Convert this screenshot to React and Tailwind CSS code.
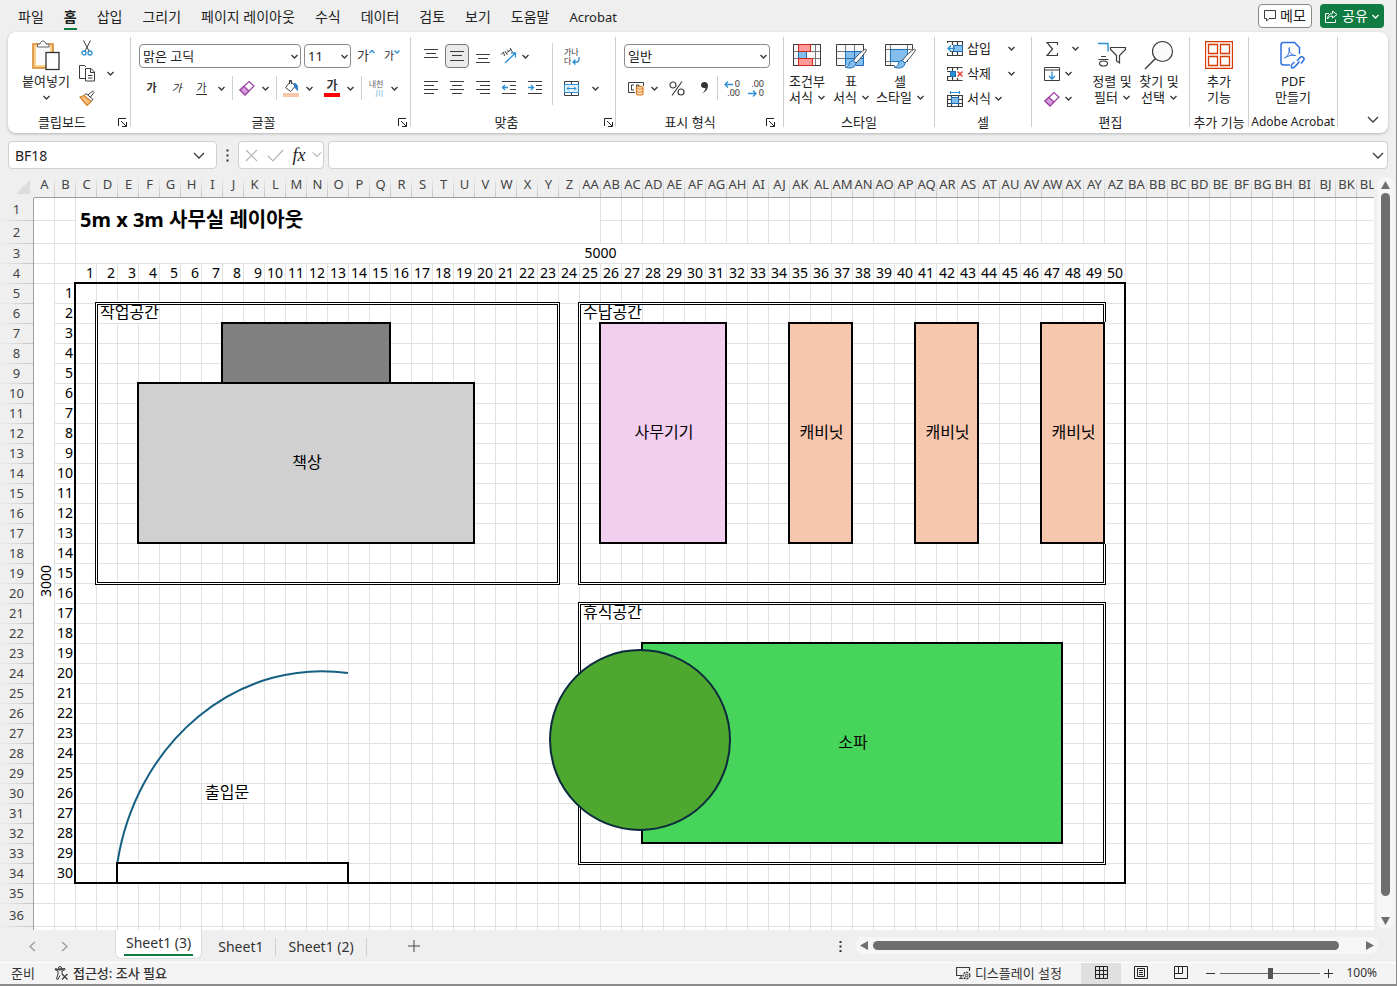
import React, { useState } from 'react';

const TABS = ['파일', '홈', '삽입', '그리기', '페이지 레이아웃', '수식', '데이터', '검토', '보기', '도움말', 'Acrobat'];

const COL_COUNT = 64;
const ROW_COUNT = 37;

const colName = (n) => {
    const first = n > 26 ? String.fromCharCode(64 + Math.floor((n - 1) / 26)) : '';
    return first + String.fromCharCode(65 + ((n - 1) % 26));
};

const COLS = Array.from({ length: COL_COUNT }, (_, i) => i + 1);
const ROWS = Array.from({ length: ROW_COUNT }, (_, i) => i + 1);

// keyed by "row-col"
const MERGES = {
    '1-3': { cols: 25, rows: 2, text: '5m x 3m 사무실 레이아웃', className: 'text-left pl-1 pb-0.5 text-[20px] font-bold' },
    '3-3': { cols: 50, rows: 1, text: '5000', className: 'text-center pb-0.5 text-sm leading-[17px]' },
    '5-1': { cols: 1, rows: 30, text: '3000', className: 'text-center pl-0.5 text-sm', vertical: true },
    '6-4': { cols: 3, rows: 1, text: '작업공간', className: 'text-left pl-[3px] pb-0.5 text-base leading-[17px]' },
    '6-27': { cols: 3, rows: 1, text: '수납공간', className: 'text-left pl-[3px] pb-0.5 text-base leading-[17px]' },
    '21-27': { cols: 3, rows: 1, text: '휴식공간', className: 'text-left pl-[3px] pb-0.5 text-base leading-[17px]' },
    '30-9': { cols: 3, rows: 1, text: '출입문', className: 'text-left pl-[3px] pb-0.5 text-base leading-[17px]' },
};

const COVERED = new Set();
Object.entries(MERGES).forEach(([key, m]) => {
    const [row, col] = key.split('-').map(Number);
    for (let r = row; r < row + m.rows; r++) {
        for (let c = col; c < col + m.cols; c++) {
            if (r !== row || c !== col) COVERED.add(`${r}-${c}`);
        }
    }
});

const ROOMS = [
    { id: 'work', cols: [4, 25], rows: [6, 19] },
    { id: 'storage', cols: [27, 51], rows: [6, 19] },
    { id: 'rest', cols: [27, 51], rows: [21, 33] },
];

const BLOCKS = [
    { id: 'frame', cols: [3, 52], rows: [5, 34], className: '' },
    { id: 'chair', cols: [10, 17], rows: [7, 9], className: 'bg-[#808080]' },
    { id: 'desk', cols: [6, 21], rows: [10, 17], text: '책상', className: 'bg-[#d0d0d0]' },
    { id: 'machine', cols: [28, 33], rows: [7, 17], text: '사무기기', className: 'bg-[#f2ceef]' },
    { id: 'cabinet1', cols: [37, 39], rows: [7, 17], text: '캐비닛', className: 'bg-[#f6c6ad]' },
    { id: 'cabinet2', cols: [43, 45], rows: [7, 17], text: '캐비닛', className: 'bg-[#f6c6ad]' },
    { id: 'cabinet3', cols: [49, 51], rows: [7, 17], text: '캐비닛', className: 'bg-[#f6c6ad] shadow-[1px_0_0_#fff]' },
    { id: 'sofa', cols: [30, 49], rows: [23, 32], text: '소파', className: 'bg-[#47d45a]' },
    { id: 'door', cols: [5, 15], rows: [34, 34], className: 'bg-white' },
];

const gridArea = (item) => ({
    gridColumn: `${item.cols[0] + 1} / ${item.cols[1] + 2}`,
    gridRow: `${item.rows[0] + 1} / ${item.rows[1] + 2}`,
});

const Svg = ({ w, h, children, className = '' }) => (
    <svg width={w} height={h} viewBox={`0 0 ${w} ${h}`} fill="none" stroke="#3b3b3b" className={`shrink-0 ${className}`} aria-hidden="true">
        {children}
    </svg>
);

const Chevron = ({ className = '' }) => (
    <Svg w={7} h={5} className={className}>
        <path d="M.5 1l3 3 3-3" strokeWidth="1.4" />
    </Svg>
);

const WideChevron = ({ className = '' }) => (
    <Svg w={12} h={7} className={className}>
        <path d="M1 1l5 5 5-5" strokeWidth="1.3" />
    </Svg>
);

const IconButton = ({ label, className = 'w-[26px]', children }) => (
    <button type="button" aria-label={label} className={`h-6 flex items-center justify-center shrink-0 text-[#333] ${className}`}>
        {children}
    </button>
);

const Drop = ({ label, className = 'w-[15px]' }) => (
    <IconButton label={`${label} 옵션`} className={className}>
        <Chevron />
    </IconButton>
);

const Select = ({ label, options, className }) => {
    const [value, setValue] = useState(options[0]);

    return (
        <div className={`relative flex items-center shrink-0 ${className}`}>
            <select
                aria-label={label}
                value={value}
                onChange={(e) => setValue(e.target.value)}
                className="appearance-none w-full h-6 pl-[3px] text-[13px] leading-5 border border-[#8a8a8a] rounded bg-white"
            >
                {options.map((option) => (
                    <option key={option}>{option}</option>
                ))}
            </select>
            <Chevron className="absolute right-[3px] pointer-events-none" />
        </div>
    );
};

const Sep = () => <div className="w-px h-6 mx-[3px] bg-[#d0d0d0] shrink-0" />;

const Group = ({ title, launcher, className, children }) => (
    <>
        <section className={`flex flex-col shrink-0 ${className}`}>
            <div className="h-20 flex">{children}</div>
            <div className="h-5 flex items-center text-[13px] leading-5 whitespace-nowrap">
                <span className="flex-1 flex justify-center">{title}</span>
                {launcher && (
                    <button type="button" aria-label={`${title} 설정`} className={`w-3 flex justify-center ${launcher}`}>
                        <Svg w={9} h={9}>
                            <path d="M.5 8V.5H8M3 3l5 5M8.5 4v4.5H4" stroke="#222" />
                        </Svg>
                    </button>
                )}
            </div>
        </section>
        <div className="w-px h-[90px] mt-[5px] bg-[#cfcfcf] shrink-0" />
    </>
);

const BigButton = ({ icon, line1, line2, drop, className }) => (
    <button type="button" className={`flex flex-col items-center shrink-0 pt-[7px] text-[13px] leading-4 text-[#222] whitespace-nowrap ${className}`}>
        <span className="h-8 flex items-center">{icon}</span>
        <span className="h-4 mt-0.5">{line1}</span>
        <span className="h-4 flex items-center gap-[5px]">
            {line2}
            {drop && <Chevron />}
        </span>
    </button>
);

const Lines = ({ rows }) => (
    <Svg w={14} h={14}>
        {rows.map(([x1, x2, y]) => (
            <path key={y} d={`M${x1} ${y}H${x2}`} />
        ))}
    </Svg>
);

const Eraser = () => (
    <Svg w={16} h={16}>
        <path d="M1 10L10 1.5l5 4.5-9 9z" fill="#fff" stroke="#9b3fa5" strokeWidth="1.2" />
        <path d="M1 10l4-3.7 5 4.7-4 4z" fill="#d59ddb" stroke="#9b3fa5" strokeWidth="1.2" />
    </Svg>
);

const Brush = () => (
    <g>
        <path d="M29.5 8c-3 1.500-9 7-12 11.500l2.500 2.500c4-4 9-10 10.500-13z" fill="#fff" stroke="#444" />
        <path d="M17.500 19.500c-3 0-4 2-4.500 4-.5 1.500-2 2.500-4 2.500 3 1.500 10 2 11-3.500z" fill="#83beec" stroke="#1f6fb5" />
    </g>
);

const PasteIcon = () => (
    <Svg w={28} h={31}>
        <rect x="1" y="4" width="20" height="24" fill="#fbd38b" stroke="#d9822b" strokeWidth="1.5" />
        <rect x="4" y="7" width="14" height="18" fill="#fafafa" stroke="none" />
        <path d="M5.500 7V4H8c.5-2 1.500-3 3-3s2.500 1 3 3h3v3z" fill="#fff" stroke="#666" />
        <rect x="14" y="12.5" width="13" height="17" fill="#fff" stroke="#333" strokeWidth="1.3" />
    </Svg>
);

const ConditionalIcon = () => (
    <Svg w={28} h={24}>
        <rect x=".5" y="1.5" width="27" height="21" fill="#fafafa" />
        <path d="M0 8.500h28M0 15.500h28M5.500 1v22M13.500 1v22M22.500 1v22" stroke="#777" />
        <rect x=".5" y="1.5" width="27" height="21" />
        <rect x="5.5" y="8.5" width="8" height="7" fill="#7fbdec" stroke="#1e71b8" />
        <rect x="5.5" y="1.5" width="12" height="7" fill="#ff9a9a" stroke="#d2271c" />
        <rect x="5.5" y="15.5" width="14" height="7" fill="#ff9a9a" stroke="#d2271c" />
    </Svg>
);

const TableStyleIcon = () => (
    <Svg w={31} h={28}>
        <rect x=".5" y="3.5" width="27" height="21" fill="#fafafa" stroke="none" />
        <rect x="9.5" y="10.5" width="18" height="14" fill="#83beec" stroke="none" />
        <path d="M0 10.500h10M0 17.500h10M9.500 3v7M18.500 3v7" stroke="#777" />
        <path d="M9.500 10.500h18M9.500 17.500h18M9.500 10v14M18.500 10v14M27.500 10v14.500H20" stroke="#1e71b8" />
        <path d="M27.500 10V3.500H.5v21h9" />
        <Brush />
    </Svg>
);

const CellStyleIcon = () => (
    <Svg w={31} h={28}>
        <rect x=".5" y="3.5" width="27" height="21" fill="#fafafa" stroke="none" />
        <path d="M0 8.500h28M0 20.500h10M5.500 3v21M22.500 3v6" stroke="#777" />
        <rect x="5.5" y="8.5" width="17" height="12" fill="#83beec" stroke="#1e71b8" />
        <path d="M27.500 8V3.500H.5v21h9" />
        <Brush />
    </Svg>
);

const SortFilterIcon = () => (
    <Svg w={30} h={26}>
        <path d="M1 1.500h10v8" stroke="#2b8fd6" strokeWidth="1.4" />
        <path d="M4 14.500h5M1.500 17.500h10" strokeWidth="1.2" />
        <ellipse cx="6.5" cy="21.5" rx="4" ry="2.5" strokeWidth="1.2" />
        <path d="M13.500 5.500h15v2l-6 6V21l-3-2v-5.500l-6-6z" fill="#fafafa" strokeWidth="1.2" />
    </Svg>
);

const FindIcon = () => (
    <Svg w={30} h={30}>
        <circle cx="18.5" cy="11.5" r="10" fill="#fafafa" strokeWidth="1.2" />
        <path d="M11.500 18.500L1 29" strokeWidth="1.4" />
    </Svg>
);

const AddinIcon = () => (
    <Svg w={28} h={28}>
        <path d="M.5 .5h27v27H.5zM3.500 3.500h9v9h-9zM15.500 3.500h9v9h-9zM3.500 15.500h9v9h-9zM15.500 15.500h9v9h-9z" stroke="#d83b01" strokeWidth="1.3" />
    </Svg>
);

const PdfIcon = () => (
    <Svg w={26} h={28}>
        <path d="M10 24H3.500C2 24 1 23 1 21.500V4c0-1.500 1-2.500 2.500-2.500h11l5 5V13" stroke="#2f6fe0" strokeWidth="1.5" />
        <path d="M4.500 17c3-1.500 5.500-5.500 5-10.500-2 2 1 8 6 8-4-1-8 .5-11 2.500z" stroke="#2f6fe0" />
        <path d="M17 20l3-3.500c2-2 5.500.5 3.500 3L21 22.500M19.500 20.500l-3 3.500c-1.500 2-4.500 4-5 2.500s0-3.500 3-5.500" stroke="#2f6fe0" strokeWidth="1.5" />
    </Svg>
);

const CellsRow = ({ icon, text, wide }) => (
    <button type="button" className="h-[25px] flex items-center text-[13px] text-[#222]">
        <Svg w={16} h={16}>{icon}</Svg>
        <span className="ml-1">{text}</span>
        <Chevron className={wide ? 'ml-[17px]' : 'ml-1'} />
    </button>
);

const Ribbon = () => (
    <div className="mx-2 h-[101px] bg-white rounded-lg shadow-[0_1px_3px_rgba(0,0,0,0.25)] flex text-[#222] overflow-hidden shrink-0">
        <Group title="클립보드" launcher="mr-0.5" className="w-[122px]">
            <BigButton className="w-[62px] ml-[7px]" icon={<PasteIcon />} line1="붙여넣기" line2={<Chevron />} />
            <div className="pt-1 ml-px flex flex-col">
                <div className="h-[25px] flex">
                    <IconButton label="잘라내기" className="w-[18px]">
                        <Svg w={12} h={16}>
                            <path d="M2.500 .5L8 11M9.500 .5L4 11" />
                            <circle cx="3" cy="13" r="2" stroke="#2b8fd6" strokeWidth="1.3" />
                            <circle cx="9" cy="13" r="2" stroke="#2b8fd6" strokeWidth="1.3" />
                        </Svg>
                    </IconButton>
                </div>
                <div className="h-[25px] flex">
                    <IconButton label="복사" className="w-[18px]">
                        <Svg w={17} h={17}>
                            <path d="M6 13.500H.5V.5h5L7 2" />
                            <path d="M6.500 3.500H12L15.500 7v9h-9zM11.500 4v3.500H15M9 10.500h4.500M9 13h4.500" />
                        </Svg>
                    </IconButton>
                    <Drop label="복사" className="w-7" />
                </div>
                <div className="h-[25px] flex">
                    <IconButton label="서식 복사" className="w-[18px]">
                        <Svg w={17} h={16}>
                            <path d="M9 5l4.500-4L15 2.500 11.500 7" />
                            <path d="M7 3.500l7 6-2 2-7-6z" fill="#fff" />
                            <path d="M5 5.500L1 7l7 8.500 4-4z" fill="#f8c27d" stroke="#d9822b" strokeWidth="1.3" />
                        </Svg>
                    </IconButton>
                </div>
            </div>
        </Group>

        <Group title="글꼴" launcher="mr-0.5" className="w-[279px]">
            <div className="pl-2 pt-2 flex flex-col">
                <div className="h-8 flex items-center">
                    <Select label="글꼴 이름" options={['맑은 고딕', '굴림', '돋움']} className="w-[162px] mr-[3px]" />
                    <Select label="글꼴 크기" options={['11', '12', '14']} className="w-[47px]" />
                    <IconButton label="글꼴 크기 크게" className="w-[26px] ml-0.5">
                        <span className="text-[13px]">가</span>
                        <Svg w={6} h={14}><path d="M.5 4L3 1.500 5.500 4" stroke="#2b8fd6" strokeWidth="1.3" /></Svg>
                    </IconButton>
                    <IconButton label="글꼴 크기 작게">
                        <span className="text-[11px]">가</span>
                        <Svg w={6} h={14}><path d="M.5 1.500L3 4l2.500-2.500" stroke="#2b8fd6" strokeWidth="1.3" /></Svg>
                    </IconButton>
                </div>
                <div className="h-8 flex items-center">
                    <IconButton label="굵게" className="w-[25px]"><b className="text-[11px]">가</b></IconButton>
                    <IconButton label="기울임꼴" className="w-[25px]"><i className="text-[11px]">가</i></IconButton>
                    <IconButton label="밑줄" className="w-[25px]"><span className="text-[11px] leading-3 border-b border-[#333]">가</span></IconButton>
                    <Drop label="밑줄" />
                    <Sep />
                    <IconButton label="지우기" className="w-[22px]"><Eraser /></IconButton>
                    <Drop label="지우기" />
                    <Sep />
                    <IconButton label="채우기 색" className="w-[22px]">
                        <Svg w={16} h={18}>
                            <path d="M2.500 8.500l5-6 5 4.500-5 5.500z" fill="#fff" />
                            <path d="M6.500 5V1.500h2V5" />
                            <path d="M11 4.500c3 0 4 2.500 3.500 7l-2.500-3z" fill="#2b7fc6" stroke="#2b7fc6" />
                            <rect x="0" y="14" width="16" height="4" fill="#f6c6ad" stroke="none" />
                        </Svg>
                    </IconButton>
                    <Drop label="채우기 색" />
                    <IconButton label="글꼴 색" className="w-[22px] ml-1">
                        <span className="w-4 h-[18px] border-b-4 border-[#ff0000] text-xs leading-[13px] font-bold text-center">가</span>
                    </IconButton>
                    <Drop label="글꼴 색" />
                    <Sep />
                    <IconButton label="윗주 필드" className="w-[22px]">
                        <span className="flex flex-col text-[8px] leading-[9px] text-[#666]">
                            내천
                            <span className="text-right text-[#5aa5dc]">川</span>
                        </span>
                    </IconButton>
                    <Drop label="윗주 필드" />
                </div>
            </div>
        </Group>

        <Group title="맞춤" launcher="mr-px" className="w-[204px]">
            <div className="pl-[7px] pt-2 flex flex-col">
                <div className="h-8 flex items-center">
                    <IconButton label="위쪽 맞춤">
                        <Lines rows={[[0, 14, 0.5], [2, 12, 4.5], [0, 14, 8.5]]} />
                    </IconButton>
                    <IconButton label="가운데 맞춤" className="w-6 mx-px border border-[#777] rounded bg-[#ebebeb]">
                        <Lines rows={[[0, 14, 2.5], [2, 12, 6.5], [0, 14, 11.5]]} />
                    </IconButton>
                    <IconButton label="아래쪽 맞춤">
                        <Lines rows={[[0, 14, 5.5], [2, 12, 9.5], [0, 14, 13.5]]} />
                    </IconButton>
                    <IconButton label="방향" className="w-6">
                        <Svg w={17} h={16}>
                            <path d="M5 15L15.500 5M11 5h4.500v4.500" stroke="#2b8fd6" strokeWidth="1.3" />
                            <path d="M1 6.500L3.500 4l1 4M5 3l2.500 4M7 4.500L8.500 3.500M7 1.500l2 2L11 1M10 0l2.500 4" />
                        </Svg>
                    </IconButton>
                    <Drop label="방향" className="w-2.5" />
                </div>
                <div className="h-8 flex items-center">
                    <IconButton label="왼쪽 맞춤">
                        <Lines rows={[[0, 14, 0.5], [0, 10, 4.5], [0, 14, 8.5], [0, 10, 12.5]]} />
                    </IconButton>
                    <IconButton label="가로 가운데 맞춤">
                        <Lines rows={[[0, 14, 0.5], [2, 12, 4.5], [0, 14, 8.5], [2, 12, 12.5]]} />
                    </IconButton>
                    <IconButton label="오른쪽 맞춤">
                        <Lines rows={[[0, 14, 0.5], [4, 14, 4.5], [0, 14, 8.5], [4, 14, 12.5]]} />
                    </IconButton>
                    <IconButton label="내어쓰기">
                        <Svg w={14} h={14}>
                            <path d="M0 .5h14M8 4.500h6M8 8.500h6M0 12.500h14" />
                            <path d="M6 6.500H.5M3 4L.5 6.500 3 9" stroke="#2b8fd6" strokeWidth="1.3" />
                        </Svg>
                    </IconButton>
                    <IconButton label="들여쓰기">
                        <Svg w={14} h={14}>
                            <path d="M0 .5h14M8 4.500h6M8 8.500h6M0 12.500h14" />
                            <path d="M0 6.500h5.500M3 4l2.500 2.500L3 9" stroke="#2b8fd6" strokeWidth="1.3" />
                        </Svg>
                    </IconButton>
                </div>
            </div>
            <div className="w-px h-[62px] mt-[11px] ml-1 mr-[3px] bg-[#d0d0d0]" />
            <div className="pt-2 ml-px flex flex-col">
                <div className="h-8 flex items-center">
                    <IconButton label="자동 줄 바꿈" className="w-[30px]">
                        <span className="relative flex flex-col text-[8px] leading-[9px] w-4 text-left">
                            <span>가나</span>
                            <span>다</span>
                            <Svg w={8} h={8} className="absolute right-0 bottom-0">
                                <path d="M7 0v2c0 2-1 3-2.500 3H1M3.500 2.500L1 5l2.500 2.500" stroke="#2b8fd6" strokeWidth="1.3" />
                            </Svg>
                        </span>
                    </IconButton>
                </div>
                <div className="h-8 flex items-center">
                    <IconButton label="병합하고 가운데 맞춤" className="w-7">
                        <Svg w={15} h={15}>
                            <path d="M.5 .5h14v14H.5zM7.500 0v3M7.500 12v3" />
                            <rect x=".5" y="3.5" width="14" height="8" fill="#eaf4fc" stroke="#2b8fd6" />
                            <path d="M3 7.500h9M5 5.500l-2 2 2 2M10 5.500l2 2-2 2" stroke="#2b8fd6" />
                        </Svg>
                    </IconButton>
                    <Drop label="병합하고 가운데 맞춤" className="w-5" />
                </div>
            </div>
        </Group>

        <Group title="표시 형식" launcher="mr-[7px]" className="w-[167px]">
            <div className="pl-2 pt-2 flex flex-col">
                <div className="h-8 flex items-center">
                    <Select label="표시 형식" options={['일반', '숫자', '통화']} className="w-[146px]" />
                </div>
                <div className="h-8 flex items-center">
                    <IconButton label="회계 표시 형식" className="w-6">
                        <Svg w={17} h={15}>
                            <path d="M7 11.500H.5v-10h15V5" />
                            <path d="M6 4H3.500v5H6M8.500 7V4H11v2" />
                            <path d="M8.500 6.500v6c0 2 6.500 2 6.500 0v-6c0-1.500-6.500-1.500-6.500 0z" fill="#fde3c4" stroke="#e07b1a" strokeWidth="1.2" />
                            <path d="M8.500 7c0 1.500 6.500 1.500 6.500 0M8.500 10c0 1.500 6.500 1.500 6.500 0" stroke="#e07b1a" />
                        </Svg>
                    </IconButton>
                    <Drop label="회계 표시 형식" className="w-3" />
                    <IconButton label="백분율 스타일" className="w-[34px]">
                        <Svg w={16} h={15}>
                            <circle cx="4" cy="4" r="3" strokeWidth="1.2" />
                            <circle cx="12" cy="11" r="3" strokeWidth="1.2" />
                            <path d="M13 .5L3 14.500" strokeWidth="1.2" />
                        </Svg>
                    </IconButton>
                    <IconButton label="쉼표 스타일" className="w-5">
                        <Svg w={9} h={14}>
                            <path d="M4.500 1C2.500 1 1 2.200 1 4s1.300 3 3 3c.6 0 1 0 1.500-.3C5.300 9 4 11 2 12.500c4-1.500 6-4.500 6-8C8 2.500 6.500 1 4.500 1z" fill="#333" stroke="none" />
                        </Svg>
                    </IconButton>
                    <Sep />
                    <IconButton label="자릿수 늘림" className="w-[22px]">
                        <span className="relative flex flex-col text-[9px] leading-[9px] w-4 text-right">
                            <span>0</span>
                            <span>.00</span>
                            <Svg w={9} h={7} className="absolute left-0 top-0.5">
                                <path d="M9 3.500H1M4 .5l-3 3 3 3" stroke="#2b8fd6" strokeWidth="1.3" />
                            </Svg>
                        </span>
                    </IconButton>
                    <IconButton label="자릿수 줄임">
                        <span className="relative flex flex-col text-[9px] leading-[9px] w-4 text-right">
                            <span>.00</span>
                            <span>0</span>
                            <Svg w={9} h={7} className="absolute left-0 bottom-0">
                                <path d="M0 3.500h8M5 .5l3 3-3 3" stroke="#2b8fd6" strokeWidth="1.3" />
                            </Svg>
                        </span>
                    </IconButton>
                </div>
            </div>
        </Group>

        <Group title="스타일" className="w-[150px]">
            <BigButton className="w-11 ml-px" icon={<ConditionalIcon />} line1="조건부" line2="서식" drop />
            <BigButton className="w-11" icon={<TableStyleIcon />} line1="표" line2="서식" drop />
            <BigButton className="w-[54px]" icon={<CellStyleIcon />} line1="셀" line2="스타일" drop />
        </Group>

        <Group title="셀" className="w-24">
            <div className="pl-3 pt-1 flex flex-col items-start">
                <CellsRow
                    wide
                    text="삽입"
                    icon={
                        <>
                            <path d="M.5 2V.5h15v14H.5V12M5.500 1v3M10.500 1v14M5.500 11v4M11 4.500h5M3 10.500h13" strokeWidth="1.2" />
                            <rect x="6.5" y="4.5" width="9" height="6" fill="#83beec" stroke="#1e71b8" />
                            <path d="M8 7.500H1M4 4.500l-3 3 3 3" stroke="#2b8fd6" strokeWidth="1.3" />
                        </>
                    }
                />
                <CellsRow
                    wide
                    text="삭제"
                    icon={
                        <>
                            <path d="M.5 4V1.500h15M5.500 1v4M10.500 1v3M.5 11v3.500h15M5.500 11v4M10.500 12v3M0 5.500h4M0 10.500h4" strokeWidth="1.2" />
                            <rect x="3.5" y="5.5" width="5" height="5" fill="#2b8fd6" stroke="#1e71b8" />
                            <path d="M10.500 5.500l5 5M15.500 5.500l-5 5" stroke="#e0322b" strokeWidth="1.4" />
                        </>
                    }
                />
                <CellsRow
                    text="서식"
                    icon={
                        <>
                            <path d="M.5 4.500h15v11H.5zM0 8.500h4M12 8.500h4M4.500 4v12M11.500 4v12M0 12.500h16" strokeWidth="1.2" />
                            <rect x="4.5" y="6.5" width="7" height="6" fill="#83beec" stroke="#1e71b8" />
                            <path d="M3 1.500h10M3.500 0v3M12.500 0v3" stroke="#2b8fd6" />
                        </>
                    }
                />
            </div>
        </Group>

        <Group title="편집" className="w-[157px]">
            <div className="w-14 pl-2 pt-1 flex flex-col">
                <div className="h-[25px] flex items-center">
                    <IconButton label="합계" className="w-6">
                        <Svg w={12} h={14}><path d="M11.500 3V.5H1L6.500 7 1 13.500h10.500V11" strokeWidth="1.2" /></Svg>
                    </IconButton>
                    <Drop label="합계" className="w-[23px]" />
                </div>
                <div className="h-[25px] flex items-center">
                    <IconButton label="채우기" className="w-6">
                        <Svg w={16} h={14}>
                            <path d="M.5 .5h15v13H.5zM0 3h16" />
                            <path d="M8 4.500v7M5 9l3 3 3-3" stroke="#2b8fd6" strokeWidth="1.3" />
                        </Svg>
                    </IconButton>
                    <Drop label="채우기" className="w-2" />
                </div>
                <div className="h-[25px] flex items-center">
                    <IconButton label="지우기" className="w-6"><Eraser /></IconButton>
                    <Drop label="지우기" className="w-2" />
                </div>
            </div>
            <BigButton className="w-12" icon={<SortFilterIcon />} line1="정렬 및" line2="필터" drop />
            <BigButton className="w-[46px]" icon={<FindIcon />} line1="찾기 및" line2="선택" drop />
        </Group>

        <Group title="추가 기능" className="w-[58px]">
            <BigButton className="w-full" icon={<AddinIcon />} line1="추가" line2="기능" />
        </Group>

        <Group title={<span className="text-xs leading-5">Adobe Acrobat</span>} className="w-[88px]">
            <BigButton className="w-full" icon={<PdfIcon />} line1="PDF" line2="만들기" />
        </Group>

        <button type="button" aria-label="리본 축소" className="ml-auto mr-[9px] self-end mb-[10px]">
            <WideChevron />
        </button>
    </div>
);

const FormulaBar = () => (
    <div className="mx-2 mt-2 h-7 flex items-center shrink-0">
        <div className="relative h-full w-[209px] flex items-center shrink-0">
            <input aria-label="이름 상자" defaultValue="BF18" className="w-full h-full pl-1.5 pr-7 text-sm text-[#222] bg-white border border-[#d0d0d0] rounded" />
            <WideChevron className="absolute right-[12px]" />
        </div>
        <div className="w-[21px] flex justify-center">
            <Svg w={3} h={13}>
                <path d="M.5 1.500h2M.5 6.500h2M.5 11.500h2" stroke="#333" strokeWidth="2" />
            </Svg>
        </div>
        <div className="h-full w-[86px] flex items-center bg-white border border-[#d0d0d0] rounded shrink-0">
            <button type="button" aria-label="취소" className="w-6 flex justify-center">
                <Svg w={13} h={13}><path d="M1 1l11 11M12 1L1 12" stroke="#b5b5b5" strokeWidth="1.2" /></Svg>
            </button>
            <button type="button" aria-label="입력" className="w-6 flex justify-center">
                <Svg w={17} h={13}><path d="M1 7l5 5L16 1" stroke="#b5b5b5" strokeWidth="1.2" /></Svg>
            </button>
            <button type="button" aria-label="함수 삽입" className="w-6 font-['Liberation_Serif',serif] italic text-lg leading-6 text-[#222]">fx</button>
            <Svg w={10} h={6} className="mx-px"><path d="M1 .5l4 4 4-4" stroke="#888" /></Svg>
        </div>
        <div className="relative h-full flex-1 ml-1 flex items-center">
            <input aria-label="수식 입력줄" className="w-full h-full pl-2 pr-7 text-sm bg-white border border-[#d0d0d0] rounded" />
            <WideChevron className="absolute right-1" />
        </div>
    </div>
);

const Cell = ({ row, col }) => {
    const key = `${row}-${col}`;
    if (COVERED.has(key)) return null;

    const merge = MERGES[key];
    if (merge) {
        return (
            <td colSpan={merge.cols} rowSpan={merge.rows} className={`p-0 border-r border-b border-[#e1e1e1] whitespace-nowrap align-middle ${merge.className}`}>
                {merge.vertical ? <span className="inline-block rotate-180 [writing-mode:vertical-rl]">{merge.text}</span> : merge.text}
            </td>
        );
    }

    let value = '';
    if (row === 4 && col >= 3 && col <= 52) value = col - 2;
    if (col === 2 && row >= 5 && row <= 34) value = row - 4;
    return (
        <td className="p-0 pr-0.5 pb-0.5 border-r border-b border-[#e1e1e1] text-right text-sm leading-[17px]">{value}</td>
    );
};

const Sheet = () => (
    <div className="relative flex-1 min-w-0 overflow-hidden bg-white">
        <table className="table-fixed w-[1378px] border-separate border-spacing-0 text-black">
            <colgroup>
                <col className="w-[34px]" />
                {COLS.map((c) => (
                    <col key={c} className="w-[21px]" />
                ))}
            </colgroup>
            <thead>
                <tr className="h-[22px]">
                    <th className="p-0 bg-[#efefef] border-b border-[#efefef]">
                        <Svg w={14} h={14} className="ml-auto mr-1"><path d="M14 0v14H0z" fill="#dcdcdc" stroke="none" /></Svg>
                    </th>
                    {COLS.map((c) => (
                        <th key={c} scope="col" className="p-0 align-top bg-[#efefef] bg-[linear-gradient(to_bottom,#efefef,#c4c4c4)] bg-[length:1px_100%] bg-right bg-no-repeat border-b border-[#9e9e9e] text-[13px] leading-[17px] font-normal text-[#444]">
                            <span className="flex justify-center">{colName(c)}</span>
                        </th>
                    ))}
                </tr>
            </thead>
            <tbody>
                {ROWS.map((r) => (
                    <tr key={r} className={r < 3 || r === 36 ? 'h-[23px]' : 'h-5'}>
                        <th scope="row" className="p-0 pb-0.5 bg-[#efefef] bg-[linear-gradient(to_right,#efefef,#c4c4c4)] bg-[length:100%_1px] bg-bottom bg-no-repeat border-r border-[#9e9e9e] text-[13px] leading-4 font-normal text-[#444]">{r}</th>
                        {COLS.map((c) => (
                            <Cell key={c} row={r} col={c} />
                        ))}
                    </tr>
                ))}
            </tbody>
        </table>

        {/* furniture drawn over the cells */}
        <div className="absolute top-0 left-0 grid grid-cols-[34px_repeat(64,21px)] grid-rows-[22px_23px_23px_repeat(33,20px)_23px]">
            {ROOMS.map((room) => (
                <div key={room.id} style={gridArea(room)} className="-ml-0.5 -mt-0.5 -mr-px -mb-px border border-black shadow-[inset_0_0_0_1px_#fff,inset_0_0_0_2px_#000]" />
            ))}
            {BLOCKS.map((block) => (
                <div key={block.id} style={gridArea(block)} className={`-ml-0.5 -mt-0.5 pl-0.5 pb-0.5 border-2 border-black flex items-center justify-center text-base leading-4 ${block.className}`}>
                    {block.text}
                </div>
            ))}
        </div>
        <div className="absolute left-[549px] top-[473px] w-[182px] h-[182px] rounded-full bg-[#4ea72e] border-2 border-[#0c2a3e]" />
        <svg width="234" height="196" viewBox="0 0 234 196" fill="none" className="absolute left-[116px] top-[492px]" aria-hidden="true">
            <path d="M1.500 194A207.500 231 0 0 1 232 5" stroke="#156082" strokeWidth="2" />
        </svg>
    </div>
);

const VerticalScroll = () => (
    <div className="w-[22px] shrink-0 flex justify-center bg-[#efefef]">
        <div className="w-[17px] my-px flex flex-col items-center bg-[#f6f6f6] rounded-lg">
            <button type="button" aria-label="위로" className="h-4 flex items-center">
                <Svg w={9} h={8}><path d="M4.500 0L9 8H0z" fill="#6e6e6e" stroke="none" /></Svg>
            </button>
            <div className="w-[9px] h-[703px] bg-[#6e6e6e] rounded-full" />
            <button type="button" aria-label="아래로" className="h-2 mt-auto mb-1 flex items-center">
                <Svg w={9} h={8}><path d="M0 0h9L4.500 8z" fill="#6e6e6e" stroke="none" /></Svg>
            </button>
        </div>
    </div>
);

const SheetTabs = () => {
    const [active, setActive] = useState('Sheet1 (3)');
    return (
        <div className="h-8 flex items-start shrink-0 text-sm text-[#333]">
            <button type="button" aria-label="이전 시트" className="ml-6 w-4 h-8 flex items-center justify-center">
                <Svg w={7} h={11}><path d="M6 1L1 5.500 6 10" stroke="#9a9a9a" strokeWidth="1.3" /></Svg>
            </button>
            <button type="button" aria-label="다음 시트" className="ml-4 w-4 h-8 flex items-center justify-center">
                <Svg w={7} h={11}><path d="M1 1l5 4.500L1 10" stroke="#9a9a9a" strokeWidth="1.3" /></Svg>
            </button>
            <div role="tablist" className="ml-[43px] flex items-center">
                {['Sheet1 (3)', 'Sheet1', 'Sheet1 (2)'].map((name) => (
                    <button
                        key={name}
                        type="button"
                        role="tab"
                        aria-selected={name === active}
                        onClick={() => setActive(name)}
                        className={
                            name === active
                                ? 'h-[29px] mb-[3px] mr-1 px-2 bg-white border-x border-b border-[#dcdcdc] rounded-b-md'
                                : 'h-[18px] mt-px px-3 leading-[18px] border-r border-[#cfcfcf] whitespace-nowrap'
                        }
                    >
                        <span className={name === active ? 'block px-0.5 leading-[22px] border-b-2 border-[#107c41]' : ''}>{name}</span>
                    </button>
                ))}
            </div>
            <button type="button" aria-label="새 시트" className="ml-[41px] h-8 flex items-center">
                <Svg w={12} h={12}><path d="M6 0v12M0 6h12" stroke="#444" /></Svg>
            </button>
            <div className="ml-auto h-8 flex items-center">
                <Svg w={3} h={11}>
                    <path d="M.5 1h2M.5 5.500h2M.5 10h2" stroke="#333" strokeWidth="2" />
                </Svg>
            </div>
            <div className="ml-[14px] mr-[18px] mt-[7px] w-[522px] h-[17px] px-1 flex items-center bg-[#f6f6f6] rounded-lg">
                <button type="button" aria-label="왼쪽으로"><Svg w={8} h={9}><path d="M8 0v9L0 4.500z" fill="#6e6e6e" stroke="none" /></Svg></button>
                <div className="ml-[5px] w-[466px] h-[9px] bg-[#6e6e6e] rounded-full" />
                <button type="button" aria-label="오른쪽으로" className="ml-auto"><Svg w={8} h={9}><path d="M0 0v9l8-4.500z" fill="#6e6e6e" stroke="none" /></Svg></button>
            </div>
        </div>
    );
};

const StatusBar = () => {
    const [zoom, setZoom] = useState(100);
    return (
        <div className="h-6 flex items-center shrink-0 bg-[#f4f4f4] border-t border-white border-b-2 border-b-[#8a8a8a] text-[13px] leading-5 text-[#333]">
            <span className="ml-[11px] pb-0.5">준비</span>
            <button type="button" className="ml-[19px] pb-0.5 flex items-center gap-1 font-medium whitespace-nowrap">
                <Svg w={15} h={14}>
                    <circle cx="6" cy="2" r="1.5" />
                    <path d="M1 3.500l3 1.500v3L2.500 13l1.500.5L6 9.500M11.500 3.500L8 5v3M1 3.500l.5-1L5 4h2l4-1.500z" />
                    <path d="M8 8l5.500 5.500M13.500 8L8 13.500" strokeWidth="1.3" />
                </Svg>
                접근성: 조사 필요
            </button>
            <button type="button" className="ml-auto mr-[19px] pb-0.5 flex items-center gap-1 whitespace-nowrap">
                <Svg w={15} h={14}>
                    <path d="M6 9.500H.5v-8h13V5M3 12.500h4M5 10v2" strokeWidth="1.2" />
                    <circle cx="10.5" cy="9.5" r="1.3" />
                    <circle cx="10.5" cy="9.5" r="3.3" strokeDasharray="2 1" strokeWidth="1.5" />
                </Svg>
                디스플레이 설정
            </button>
            <button type="button" aria-label="기본" className="w-10 h-full pb-0.5 flex items-center justify-center bg-[#e0e0e0]">
                <Svg w={13} h={13}><path d="M.5 .5h12v12H.5zM4.500 0v13M8.500 0v13M0 4.500h13M0 8.500h13" stroke="#222" /></Svg>
            </button>
            <button type="button" aria-label="페이지 레이아웃" className="w-10 h-full pb-0.5 flex items-center justify-center">
                <Svg w={14} h={13}><path d="M.5 .5h13v12H.5zM3.500 2.500h7v8h-7zM5 4.500h4M5 6.500h4M5 8.500h4" stroke="#222" /></Svg>
            </button>
            <button type="button" aria-label="페이지 나누기 미리 보기" className="w-10 h-full pb-0.5 flex items-center justify-center">
                <Svg w={14} h={13}><path d="M.5 .5h13v12H.5zM0 7.500h8.500V0M4.500 0v7" stroke="#222" /></Svg>
            </button>
            <button type="button" aria-label="축소" className="ml-[5px] pb-px"><Svg w={9} h={9}><path d="M0 4.500h9" stroke="#333" /></Svg></button>
            <input
                type="range"
                aria-label="확대/축소"
                min="0"
                max="200"
                value={zoom}
                onChange={(e) => setZoom(Number(e.target.value))}
                className="appearance-none ml-[5px] w-[100px] h-3 bg-transparent [&::-webkit-slider-runnable-track]:h-px [&::-webkit-slider-runnable-track]:bg-[#666] [&::-webkit-slider-thumb]:appearance-none [&::-webkit-slider-thumb]:w-[5px] [&::-webkit-slider-thumb]:h-[11px] [&::-webkit-slider-thumb]:-mt-[5px] [&::-webkit-slider-thumb]:bg-[#555]"
            />
            <button type="button" aria-label="확대" className="ml-1 pb-px"><Svg w={9} h={9}><path d="M0 4.500h9M4.500 0v9" stroke="#333" /></Svg></button>
            <span className="w-11 mr-[19px] pb-0.5 text-right text-xs leading-5">{zoom}%</span>
        </div>
    );
};

const App = () => {
    const [tab, setTab] = useState('홈');

    return (
        <div className="h-screen flex flex-col overflow-hidden bg-[#efefef] border-r border-[#8a8a8a] font-['Noto_Sans','Noto_Sans_CJK_KR',sans-serif]">
            <header className="h-8 flex items-center shrink-0 pl-[18px] pr-3 text-[#222]">
                <nav className="flex items-center gap-5 text-sm whitespace-nowrap">
                    {TABS.map((name) => (
                        <button
                            key={name}
                            type="button"
                            onClick={() => setTab(name)}
                            className={`h-6 mt-1 leading-[22px] border-b-2 ${name === tab ? 'font-bold border-[#107c41]' : 'border-transparent'} ${name === 'Acrobat' ? 'text-[13px]' : ''}`}
                        >
                            {name}
                        </button>
                    ))}
                </nav>
                <button type="button" className="ml-auto w-[54px] h-6 flex items-center justify-center gap-1 bg-white border border-[#8a8a8a] rounded text-sm leading-5">
                    <Svg w={12} h={12}><path d="M.5 .5h11v8H5L2.500 11V8.500h-2z" /></Svg>
                    메모
                </button>
                <button type="button" className="ml-2 w-16 h-6 flex items-center justify-center gap-1 bg-[#107c41] rounded text-sm leading-5 text-white">
                    <Svg w={13} h={13}>
                        <path d="M4 3.500H.5v9h10V9.500M7.500 1L12 4.500 7.500 8V6C5 6 3.500 7 2.500 9c0-3 2-5.500 5-5.500z" stroke="#fff" />
                    </Svg>
                    공유
                    <Svg w={7} h={5}><path d="M.5 1l3 3 3-3" stroke="#fff" strokeWidth="1.4" /></Svg>
                </button>
            </header>
            <Ribbon />
            <FormulaBar />
            <main className="mt-[7px] flex-1 min-h-0 flex">
                <Sheet />
                <VerticalScroll />
            </main>
            <SheetTabs />
            <StatusBar />
        </div>
    );
};

export default App;
